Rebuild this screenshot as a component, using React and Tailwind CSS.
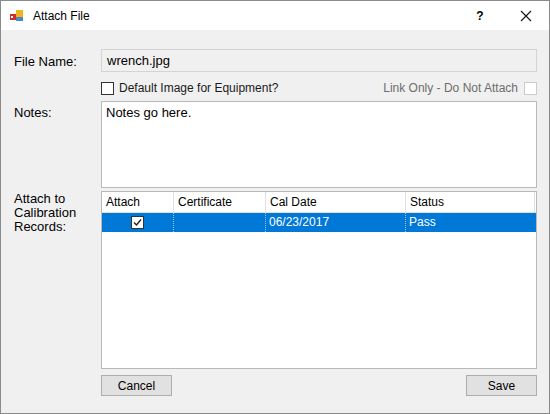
function App() {
    const cols = ["w-[72px]", "w-[92px]", "w-[140px]", "flex-1"];
    const headers = ["Attach", "Certificate", "Cal Date", "Status"];
    return (
        <div className="w-[550px] h-[414px] flex flex-col border border-[#8a8a8a] bg-[#f0f0f0] text-[12px] text-black" style={{ fontFamily: "'Segoe UI', 'Liberation Sans', Arial, sans-serif" }}>
            {/* Title bar */}
            <div className="h-[29px] bg-white flex items-center pl-[8px] shrink-0">
                <svg width="16" height="16" viewBox="0 0 16 16">
                    <rect x="1" y="6" width="6" height="6" fill="#c8302c" />
                    <rect x="2" y="8" width="2" height="2" fill="#fff" />
                    <rect x="7" y="2" width="7" height="7" fill="#f2b21b" />
                    <rect x="7" y="9" width="7" height="4" fill="#4d86c8" />
                </svg>
                <span className="ml-[8px]">Attach File</span>
                <span className="ml-auto w-[46px] text-center font-bold text-[12px]">?</span>
                <span className="w-[46px] flex justify-center">
                    <svg width="12" height="12" viewBox="0 0 12 12"><path d="M1 1 L11 11 M11 1 L1 11" stroke="#111" strokeWidth="1.1" /></svg>
                </span>
            </div>

            <div className="flex-1 flex flex-col pl-[13px] pr-[12px] pt-[19px]">
                <div className="flex">
                    <div className="w-[87px] pt-[3px] text-[13px]">File Name:</div>
                    <div className="flex-1 h-[23px] border border-[#d4d4d4] bg-[#f0f0f0] px-[5px] text-[13px] leading-[21px]">wrench.jpg</div>
                </div>
                <div className="flex items-center mt-[7px] ml-[87px] text-[#1a1a1a]">
                    <span className="w-[13px] h-[13px] border border-[#333] bg-white" />
                    <span className="ml-[5px]">Default Image for Equipment?</span>
                    <span className="ml-auto text-[#6d6d6d]">Link Only - Do Not Attach</span>
                    <span className="ml-[6px] w-[13px] h-[13px] border border-[#cccccc] bg-white" />
                </div>
                <div className="flex mt-[4px]">
                    <div className="w-[87px] pt-[2px] text-[13px]">Notes:</div>
                    <div className="flex-1 h-[87px] border border-[#b9b9b9] bg-white px-[4px] pt-[1px] text-[13px]">Notes go here.</div>
                </div>
                <div className="flex mt-[3px]">
                    <div className="w-[87px] pt-[1px] text-[13px] leading-[14px]">Attach to<br />Calibration<br />Records:</div>
                    <div className="flex-1 h-[178px] border border-[#b9b9b9] bg-white flex flex-col">
                        <div className="flex h-[21px] bg-white border-b border-[#e0e0e0] pr-[1px]">
                            {headers.map((h, i) => (
                                <div key={h} className={`${cols[i]} border-r border-[#e0e0e0] px-[4px] leading-[20px]`}>{h}</div>
                            ))}
                        </div>
                        <div className="flex h-[19px] bg-[#0078d7] text-white leading-[18px] pr-[1px]">
                            <div className={`${cols[0]} flex justify-center items-center border-r border-dotted border-[#9fc6ec]`}>
                                <span className="w-[13px] h-[13px] bg-white border border-[#333] flex items-center justify-center">
                                    <svg width="11" height="11" viewBox="0 0 11 11"><path d="M2 5.5 L4.5 8 L9 2.5" stroke="#222" strokeWidth="1.4" fill="none" /></svg>
                                </span>
                            </div>
                            <div className={`${cols[1]} border-r border-dotted border-[#9fc6ec]`} />
                            <div className={`${cols[2]} border-r border-dotted border-[#9fc6ec] px-[3px]`}>06/23/2017</div>
                            <div className={`${cols[3]} px-[3px]`}>Pass</div>
                        </div>
                    </div>
                </div>
                <div className="flex justify-between mt-[6px] ml-[87px]">
                    <button className="w-[71px] h-[21px] border border-[#adadad] bg-[#e1e1e1]">Cancel</button>
                    <button className="w-[71px] h-[21px] border border-[#adadad] bg-[#e1e1e1]">Save</button>
                </div>
            </div>
        </div>
    );
}

export default App;
